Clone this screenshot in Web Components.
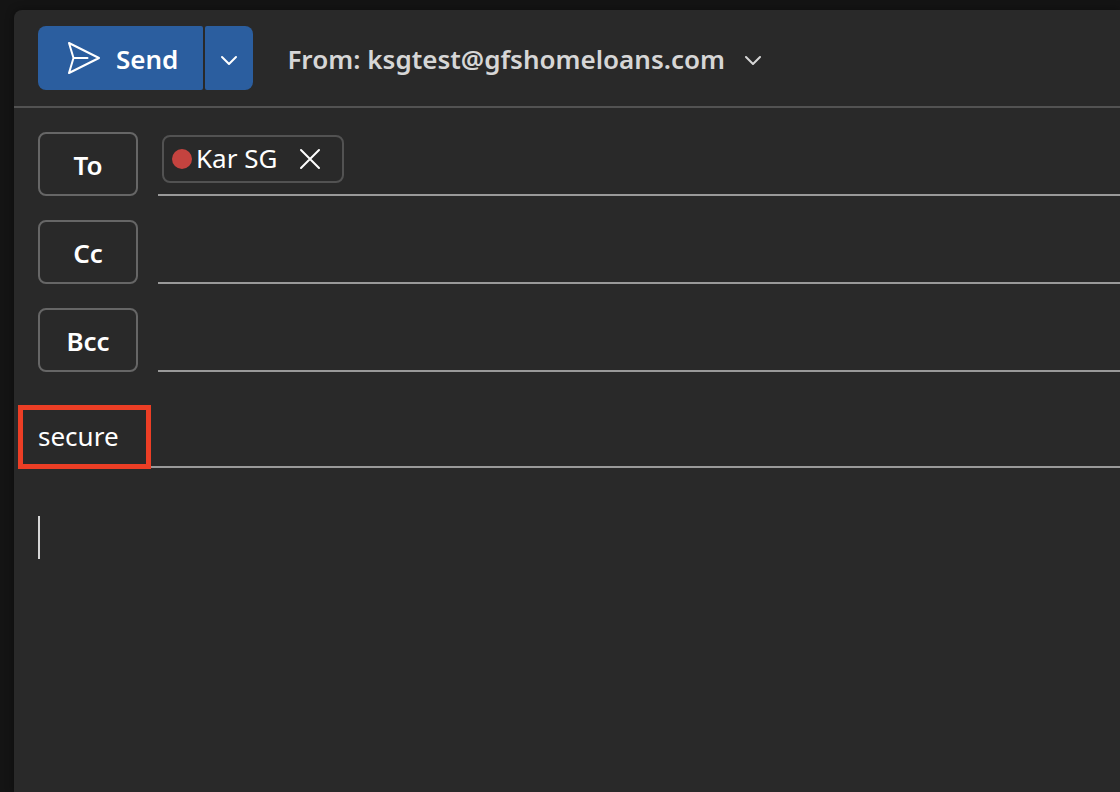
<!DOCTYPE html>
<html lang="en">
<head>
<meta charset="utf-8">
<meta name="viewport" content="width=device-width, initial-scale=1">
<title>New message</title>
<style>
  html {
    height: 100%;
  }
  body {
    --sheet: #292929;
    --accent: #2b5e9f;
    --line: #999999;
    --stroke: #666666;
    background-color: #141414;
    box-sizing: border-box;
    color: white;
    font-family: "Noto Sans", "Open Sans", sans-serif;
    font-size: 26px;
    line-height: 36px;
    margin: 0;
    min-height: 100%;
    overflow-x: hidden;
    padding: 10px 0 0 14px;
    display: flex;
    flex-direction: column;
  }
  mail-composer {
    flex: 1;
  }
</style>
</head>
<body>
<mail-composer>
  <send-button slot="toolbar">Send</send-button>
  <from-picker slot="toolbar" address="ksgtest@gfshomeloans.com"></from-picker>
  <recipient-row label="To">
    <person-chip>Kar SG</person-chip>
  </recipient-row>
  <recipient-row label="Cc"></recipient-row>
  <recipient-row label="Bcc"></recipient-row>
  <subject-row value="secure"></subject-row>
  <message-body></message-body>
</mail-composer>

<script>
class MailComposer extends HTMLElement {
  constructor() {
    super();
    this.attachShadow({ mode: 'open' });
    this.shadowRoot.innerHTML = /* html */`
      <style>
        :host {
          background-color: var(--sheet);
          border-top-left-radius: 8px;
          box-shadow: 0 0 8px rgba(0, 0, 0, 0.4);
          display: flex;
          flex-direction: column;
        }
        header {
          align-items: center;
          border-bottom: 2px solid #525252;
          display: flex;
          gap: 34px;
          padding: 16px 24px;
        }
        main {
          display: flex;
          flex: 1;
          flex-direction: column;
          gap: 24px;
          padding: 24px 0 0 24px;
        }
      </style>
      <header><slot name="toolbar"></slot></header>
      <main><slot></slot></main>
    `;
  }
}

class SendButton extends HTMLElement {
  constructor() {
    super();
    this.attachShadow({ mode: 'open' });
    this.shadowRoot.innerHTML = /* html */`
      <style>
        :host {
          display: flex;
          gap: 2px;
        }
        button {
          align-items: center;
          background-color: var(--accent);
          border: none;
          color: white;
          cursor: pointer;
          display: flex;
          font: inherit;
          font-weight: 600;
          height: 64px;
          justify-content: center;
          margin: 0;
        }
        button:hover {
          filter: brightness(1.1);
        }
        .send {
          border-radius: 8px 2px 2px 8px;
          gap: 14px;
          padding: 0 25px 0 28px;
        }
        .label {
          padding-top: 2px;
        }
        .more {
          border-radius: 2px 8px 8px 2px;
          padding: 6px 0 0;
          width: 48px;
        }
        svg {
          fill: none;
          stroke: currentColor;
          stroke-linecap: round;
          stroke-linejoin: round;
          stroke-width: 2;
        }
      </style>
      <button class="send" type="button">
        <svg width="36" height="36" viewBox="0 0 36 36" aria-hidden="true">
          <path d="M3 3 L33 18 L3 33 L7.5 18 Z M7.5 18 H21.5"/>
        </svg>
        <span class="label"><slot></slot></span>
      </button>
      <button class="more" type="button" aria-label="More send options">
        <svg width="18" height="12" viewBox="0 0 18 12" aria-hidden="true">
          <path d="M2 2 L9 9 L16 2"/>
        </svg>
      </button>
    `;
  }
}

class FromPicker extends HTMLElement {
  constructor() {
    super();
    this.attachShadow({ mode: 'open' });
    this.shadowRoot.innerHTML = /* html */`
      <style>
        :host {
          align-items: center;
          color: #d6d6d6;
          display: flex;
          font-weight: 600;
          gap: 7px;
          padding-top: 2px;
        }
        .picker {
          align-items: center;
          display: grid;
        }
        select, svg {
          grid-area: 1 / 1;
        }
        select {
          appearance: none;
          background: none;
          border: none;
          color: inherit;
          cursor: pointer;
          font: inherit;
          margin: 0;
          padding: 0 37px 0 0;
        }
        option {
          background-color: var(--sheet);
        }
        svg {
          fill: none;
          justify-self: end;
          pointer-events: none;
          stroke: currentColor;
          stroke-linecap: round;
          stroke-linejoin: round;
          stroke-width: 2;
        }
      </style>
      <label for="from">From:</label>
      <div class="picker">
        <select id="from"><option></option></select>
        <svg width="18" height="12" viewBox="0 0 18 12" aria-hidden="true">
          <path d="M2 4 L9 11 L16 4"/>
        </svg>
      </div>
    `;
  }

  connectedCallback() {
    this.shadowRoot.querySelector('option').textContent = this.getAttribute('address');
  }
}

class RecipientRow extends HTMLElement {
  constructor() {
    super();
    this.attachShadow({ mode: 'open' });
    this.shadowRoot.innerHTML = /* html */`
      <style>
        :host {
          display: flex;
          gap: 20px;
        }
        button {
          background: none;
          border: 2px solid var(--stroke);
          border-radius: 8px;
          box-sizing: border-box;
          color: inherit;
          cursor: pointer;
          font: inherit;
          font-weight: 600;
          height: 64px;
          margin: 0;
          padding: 2px 0 0;
          width: 100px;
        }
        .field {
          align-items: flex-start;
          border-bottom: 2px solid var(--line);
          display: flex;
          flex: 1;
          gap: 8px;
          padding: 3px 4px;
        }
        input {
          background: none;
          border: none;
          color: inherit;
          flex: 1;
          font: inherit;
          height: 48px;
          min-width: 0;
          outline: none;
          padding: 0;
        }
      </style>
      <button id="name" type="button"></button>
      <div class="field">
        <slot></slot>
        <input type="text" aria-labelledby="name">
      </div>
    `;
  }

  connectedCallback() {
    this.shadowRoot.getElementById('name').textContent = this.getAttribute('label');
  }
}

class PersonChip extends HTMLElement {
  constructor() {
    super();
    this.attachShadow({ mode: 'open' });
    this.shadowRoot.innerHTML = /* html */`
      <style>
        :host {
          align-items: center;
          border: 2px solid #525252;
          border-radius: 8px;
          box-sizing: border-box;
          display: flex;
          height: 48px;
          padding: 0 21px 0 8px;
        }
        .presence {
          background-color: #c4433f;
          border-radius: 50%;
          height: 20px;
          margin-right: 4px;
          width: 20px;
        }
        .name {
          padding-bottom: 2px;
        }
        button {
          background: none;
          border: none;
          color: inherit;
          cursor: pointer;
          display: flex;
          margin: 0 0 0 22px;
          padding: 0;
        }
        svg {
          fill: none;
          stroke: currentColor;
          stroke-linecap: round;
          stroke-width: 2;
        }
      </style>
      <span class="presence"></span>
      <span class="name"><slot></slot></span>
      <button type="button" aria-label="Remove">
        <svg width="22" height="22" viewBox="0 0 22 22" aria-hidden="true">
          <path d="M2 2 L20 20 M20 2 L2 20"/>
        </svg>
      </button>
    `;
    this.shadowRoot.querySelector('button').addEventListener('click', () => {
      this.remove();
    });
  }
}

class SubjectRow extends HTMLElement {
  constructor() {
    super();
    this.attachShadow({ mode: 'open' });
    this.shadowRoot.innerHTML = /* html */`
      <style>
        :host {
          border-bottom: 2px solid var(--line);
          display: flex;
          margin-top: 8px;
          position: relative;
        }
        input {
          background: none;
          border: none;
          box-sizing: border-box;
          color: inherit;
          flex: 1;
          font: inherit;
          height: 62px;
          min-width: 0;
          outline: none;
          padding: 2px 0 0;
        }
        /* callout frame over the start of the subject */
        .callout {
          border: 5px solid #ec3e25;
          box-sizing: border-box;
          height: 64px;
          left: -20px;
          pointer-events: none;
          position: absolute;
          top: 1px;
          width: 133px;
        }
      </style>
      <input type="text" aria-label="Subject">
      <div class="callout"></div>
    `;
  }

  connectedCallback() {
    this.shadowRoot.querySelector('input').value = this.getAttribute('value');
  }
}

class MessageBody extends HTMLElement {
  constructor() {
    super();
    this.attachShadow({ mode: 'open' });
    this.shadowRoot.innerHTML = /* html */`
      <style>
        :host {
          display: flex;
          flex: 1;
          margin-top: 24px;
        }
        .caret {
          background-color: #d6d6d6;
          height: 43px;
          width: 2px;
        }
        textarea {
          background: none;
          border: none;
          color: inherit;
          flex: 1;
          font: inherit;
          outline: none;
          padding: 0;
          resize: none;
        }
      </style>
      <span class="caret"></span>
      <textarea aria-label="Message body"></textarea>
    `;
  }
}

customElements.define('mail-composer', MailComposer);
customElements.define('send-button', SendButton);
customElements.define('from-picker', FromPicker);
customElements.define('recipient-row', RecipientRow);
customElements.define('person-chip', PersonChip);
customElements.define('subject-row', SubjectRow);
customElements.define('message-body', MessageBody);
</script>
</body>
</html>
